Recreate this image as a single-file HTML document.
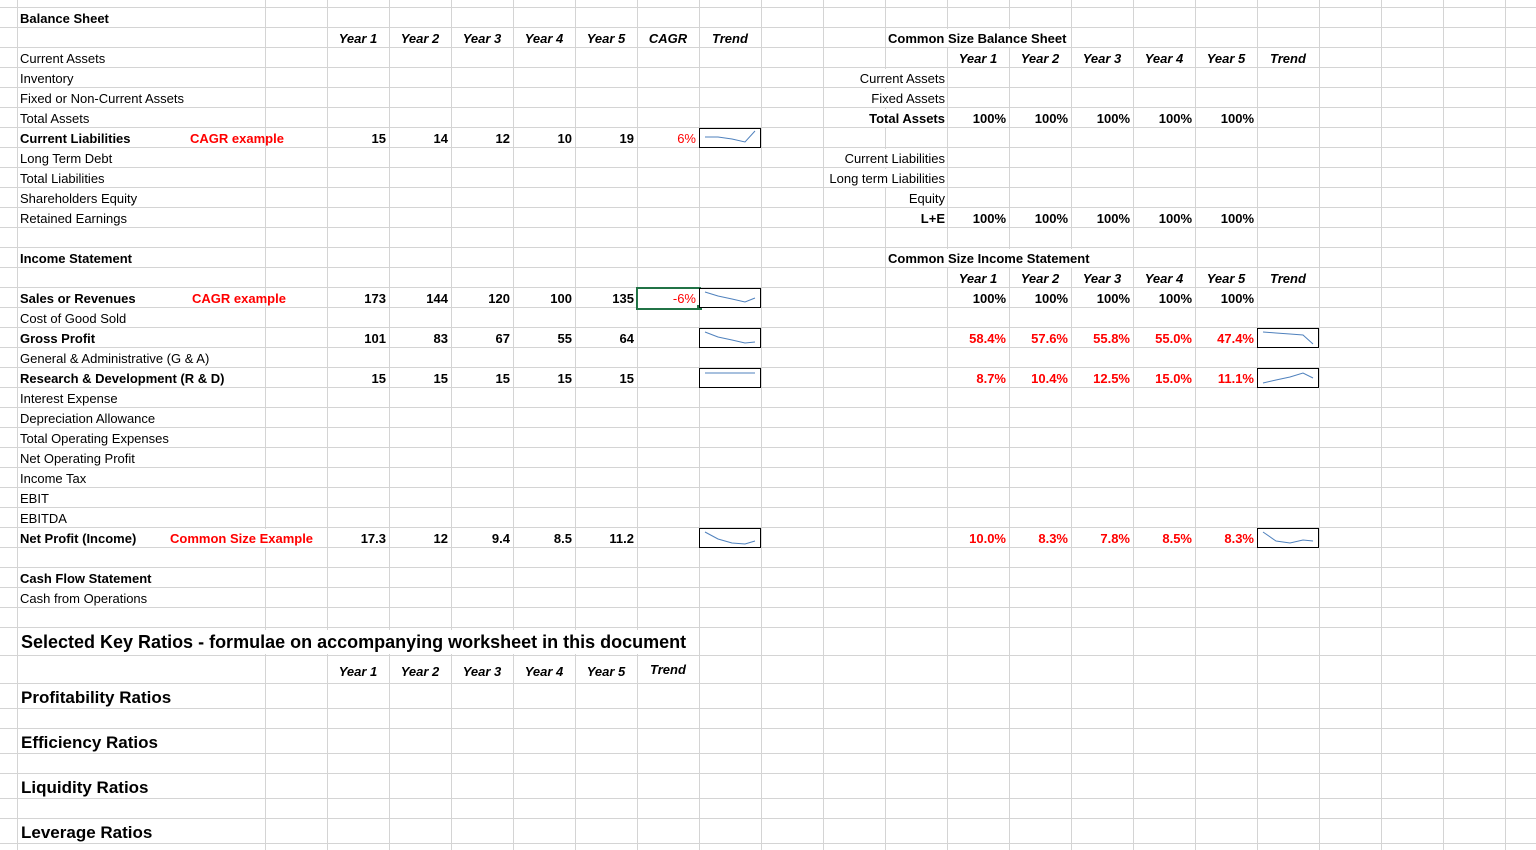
<!DOCTYPE html>
<html><head><meta charset="utf-8"><style>
body{margin:0;width:1536px;height:850px;overflow:hidden;background:#fff;font-family:"Liberation Sans",sans-serif;font-size:13px;color:#000;position:relative}
.h{position:absolute;left:0;width:1536px;height:1px;background:#d4d4d4}
.v{position:absolute;top:0;width:1px;height:850px;background:#d4d4d4}
.t{position:absolute;height:19px;line-height:20px;white-space:nowrap;transform:translateY(1px)}
.l{left:20px}
.b{font-weight:bold}
.r{color:#f00;font-weight:bold}
.w{background:#fff;height:18px;line-height:19px}
.n{width:59px;text-align:right;font-weight:bold}
.y{width:62px;text-align:center;font-weight:bold;font-style:italic}
.big{font-size:17px;font-weight:bold}
svg{position:absolute}
</style></head><body>
<div style="position:absolute;left:0;top:0;width:1536px;height:628px;background-image:linear-gradient(to bottom,#d4d4d4 1px,transparent 1px);background-size:100% 20px;background-position:0 7px"></div>
<div class="h" style="top:655px"></div><div class="h" style="top:683px"></div><div class="h" style="top:708px"></div><div class="h" style="top:728px"></div><div class="h" style="top:753px"></div><div class="h" style="top:773px"></div><div class="h" style="top:798px"></div><div class="h" style="top:818px"></div><div class="h" style="top:843px"></div>
<div class="v" style="left:17px"></div>
<div style="position:absolute;left:265px;top:0;width:1271px;height:850px;background-image:linear-gradient(to right,#d4d4d4 1px,transparent 1px);background-size:62px 100%"></div>

<div class="t l b" style="top:8px">Balance Sheet</div>
<div class="t l" style="top:48px">Current Assets</div>
<div class="t l" style="top:68px">Inventory</div>
<div class="t l" style="top:88px">Fixed or Non-Current Assets</div>
<div class="t l" style="top:108px">Total Assets</div>
<div class="t l b" style="top:128px">Current Liabilities</div>
<div class="t r" style="top:128px;left:190px">CAGR example</div>
<div class="t l" style="top:148px">Long Term Debt</div>
<div class="t l" style="top:168px">Total Liabilities</div>
<div class="t l" style="top:188px">Shareholders Equity</div>
<div class="t l" style="top:208px">Retained Earnings</div>
<div class="t l b" style="top:248px">Income Statement</div>
<div class="t l b" style="top:288px">Sales or Revenues</div>
<div class="t r" style="top:288px;left:192px">CAGR example</div>
<div class="t l" style="top:308px">Cost of Good Sold</div>
<div class="t l b" style="top:328px">Gross Profit</div>
<div class="t l" style="top:348px">General &amp; Administrative (G &amp; A)</div>
<div class="t l b" style="top:368px">Research &amp; Development (R &amp; D)</div>
<div class="t l" style="top:388px">Interest Expense</div>
<div class="t l" style="top:408px">Depreciation Allowance</div>
<div class="t l" style="top:428px">Total Operating Expenses</div>
<div class="t l" style="top:448px">Net Operating Profit</div>
<div class="t l" style="top:468px">Income Tax</div>
<div class="t l" style="top:488px">EBIT</div>
<div class="t l" style="top:508px">EBITDA</div>
<div class="t l b" style="top:528px">Net Profit (Income)</div>
<div class="t r w" style="top:528px;left:170px">Common Size Example</div>
<div class="t l b" style="top:568px">Cash Flow Statement</div>
<div class="t l" style="top:588px">Cash from Operations</div>

<div class="t y" style="top:28px;left:327px">Year 1</div><div class="t y" style="top:28px;left:389px">Year 2</div><div class="t y" style="top:28px;left:451px">Year 3</div><div class="t y" style="top:28px;left:513px">Year 4</div><div class="t y" style="top:28px;left:575px">Year 5</div><div class="t y" style="top:28px;left:637px">CAGR</div><div class="t y" style="top:28px;left:699px">Trend</div>

<div class="t n" style="top:128px;left:327px">15</div><div class="t n" style="top:128px;left:389px">14</div><div class="t n" style="top:128px;left:451px">12</div><div class="t n" style="top:128px;left:513px">10</div><div class="t n" style="top:128px;left:575px">19</div><div class="t n r" style="top:128px;left:637px;font-weight:normal">6%</div>
<div class="t n" style="top:288px;left:327px">173</div><div class="t n" style="top:288px;left:389px">144</div><div class="t n" style="top:288px;left:451px">120</div><div class="t n" style="top:288px;left:513px">100</div><div class="t n" style="top:288px;left:575px">135</div>
<div style="position:absolute;left:636px;top:287px;width:61px;height:19px;border:2px solid #217346;background:#fff"></div>
<div style="position:absolute;left:697px;top:305px;width:5px;height:5px;background:#217346"></div>
<div class="t n" style="top:288px;left:637px;color:#f00;font-weight:normal">-6%</div>
<div class="t n" style="top:328px;left:327px">101</div><div class="t n" style="top:328px;left:389px">83</div><div class="t n" style="top:328px;left:451px">67</div><div class="t n" style="top:328px;left:513px">55</div><div class="t n" style="top:328px;left:575px">64</div>
<div class="t n" style="top:368px;left:327px">15</div><div class="t n" style="top:368px;left:389px">15</div><div class="t n" style="top:368px;left:451px">15</div><div class="t n" style="top:368px;left:513px">15</div><div class="t n" style="top:368px;left:575px">15</div>
<div class="t n" style="top:528px;left:327px">17.3</div><div class="t n" style="top:528px;left:389px">12</div><div class="t n" style="top:528px;left:451px">9.4</div><div class="t n" style="top:528px;left:513px">8.5</div><div class="t n" style="top:528px;left:575px">11.2</div>

<svg style="left:699px;top:128px" width="63" height="20"><rect x="0.5" y="0.5" width="61" height="19" fill="#fff" stroke="#000"/><polyline fill="none" stroke="#4f81bd" points="6,9 19,9 33,11 46,14 56,3"/></svg>
<svg style="left:699px;top:288px" width="63" height="20"><rect x="0.5" y="0.5" width="61" height="19" fill="#fff" stroke="#000"/><polyline fill="none" stroke="#4f81bd" points="6,4 19,8 33,11 46,14 56,10"/></svg>
<svg style="left:699px;top:328px" width="63" height="20"><rect x="0.5" y="0.5" width="61" height="19" fill="#fff" stroke="#000"/><polyline fill="none" stroke="#4f81bd" points="6,4 19,9 33,12 46,15 56,14"/></svg>
<svg style="left:699px;top:368px" width="63" height="20"><rect x="0.5" y="0.5" width="61" height="19" fill="#fff" stroke="#000"/><polyline fill="none" stroke="#4f81bd" points="6,5 56,5"/></svg>
<svg style="left:699px;top:528px" width="63" height="20"><rect x="0.5" y="0.5" width="61" height="19" fill="#fff" stroke="#000"/><polyline fill="none" stroke="#4f81bd" points="6,4 19,11 33,15 46,16 56,13"/></svg>

<div class="t b w" style="top:28px;left:888px">Common Size Balance Sheet</div>
<div class="t y" style="top:48px;left:947px">Year 1</div><div class="t y" style="top:48px;left:1009px">Year 2</div><div class="t y" style="top:48px;left:1071px">Year 3</div><div class="t y" style="top:48px;left:1133px">Year 4</div><div class="t y" style="top:48px;left:1195px">Year 5</div><div class="t y" style="top:48px;left:1257px">Trend</div>
<div class="t w" style="top:68px;right:591px">Current Assets</div>
<div class="t w" style="top:88px;right:591px">Fixed Assets</div>
<div class="t w b" style="top:108px;right:591px">Total Assets</div>
<div class="t w" style="top:148px;right:591px">Current Liabilities</div>
<div class="t w" style="top:168px;right:591px">Long term Liabilities</div>
<div class="t w" style="top:188px;right:591px">Equity</div>
<div class="t w b" style="top:208px;right:591px">L+E</div>
<div class="t n" style="top:108px;left:947px">100%</div><div class="t n" style="top:108px;left:1009px">100%</div><div class="t n" style="top:108px;left:1071px">100%</div><div class="t n" style="top:108px;left:1133px">100%</div><div class="t n" style="top:108px;left:1195px">100%</div>
<div class="t n" style="top:208px;left:947px">100%</div><div class="t n" style="top:208px;left:1009px">100%</div><div class="t n" style="top:208px;left:1071px">100%</div><div class="t n" style="top:208px;left:1133px">100%</div><div class="t n" style="top:208px;left:1195px">100%</div>
<div class="t b w" style="top:248px;left:888px">Common Size Income Statement</div>
<div class="t y" style="top:268px;left:947px">Year 1</div><div class="t y" style="top:268px;left:1009px">Year 2</div><div class="t y" style="top:268px;left:1071px">Year 3</div><div class="t y" style="top:268px;left:1133px">Year 4</div><div class="t y" style="top:268px;left:1195px">Year 5</div><div class="t y" style="top:268px;left:1257px">Trend</div>
<div class="t n" style="top:288px;left:947px">100%</div><div class="t n" style="top:288px;left:1009px">100%</div><div class="t n" style="top:288px;left:1071px">100%</div><div class="t n" style="top:288px;left:1133px">100%</div><div class="t n" style="top:288px;left:1195px">100%</div>
<div class="t n r" style="top:328px;left:947px">58.4%</div><div class="t n r" style="top:328px;left:1009px">57.6%</div><div class="t n r" style="top:328px;left:1071px">55.8%</div><div class="t n r" style="top:328px;left:1133px">55.0%</div><div class="t n r" style="top:328px;left:1195px">47.4%</div>
<div class="t n r" style="top:368px;left:947px">8.7%</div><div class="t n r" style="top:368px;left:1009px">10.4%</div><div class="t n r" style="top:368px;left:1071px">12.5%</div><div class="t n r" style="top:368px;left:1133px">15.0%</div><div class="t n r" style="top:368px;left:1195px">11.1%</div>
<div class="t n r" style="top:528px;left:947px">10.0%</div><div class="t n r" style="top:528px;left:1009px">8.3%</div><div class="t n r" style="top:528px;left:1071px">7.8%</div><div class="t n r" style="top:528px;left:1133px">8.5%</div><div class="t n r" style="top:528px;left:1195px">8.3%</div>
<svg style="left:1257px;top:328px" width="63" height="20"><rect x="0.5" y="0.5" width="61" height="19" fill="#fff" stroke="#000"/><polyline fill="none" stroke="#4f81bd" points="6,4 19,5 33,6 46,7 56,16"/></svg>
<svg style="left:1257px;top:368px" width="63" height="20"><rect x="0.5" y="0.5" width="61" height="19" fill="#fff" stroke="#000"/><polyline fill="none" stroke="#4f81bd" points="6,15 19,12 33,9 46,5 56,10"/></svg>
<svg style="left:1257px;top:528px" width="63" height="20"><rect x="0.5" y="0.5" width="61" height="19" fill="#fff" stroke="#000"/><polyline fill="none" stroke="#4f81bd" points="6,4 19,13 33,15 46,12 56,13"/></svg>

<div class="t big w" style="top:629px;left:21px;height:24px;line-height:24px;padding-right:4px;font-size:18px">Selected Key Ratios - formulae on accompanying worksheet in this document</div>
<div class="t y" style="top:661px;left:327px">Year 1</div><div class="t y" style="top:661px;left:389px">Year 2</div><div class="t y" style="top:661px;left:451px">Year 3</div><div class="t y" style="top:661px;left:513px">Year 4</div><div class="t y" style="top:661px;left:575px">Year 5</div><div class="t y" style="top:659px;left:637px">Trend</div>
<div class="t big" style="top:686px;left:21px;line-height:22px">Profitability Ratios</div>
<div class="t big" style="top:731px;left:21px;line-height:22px">Efficiency Ratios</div>
<div class="t big" style="top:776px;left:21px;line-height:22px">Liquidity Ratios</div>
<div class="t big" style="top:821px;left:21px;line-height:22px">Leverage Ratios</div>
</body></html>
